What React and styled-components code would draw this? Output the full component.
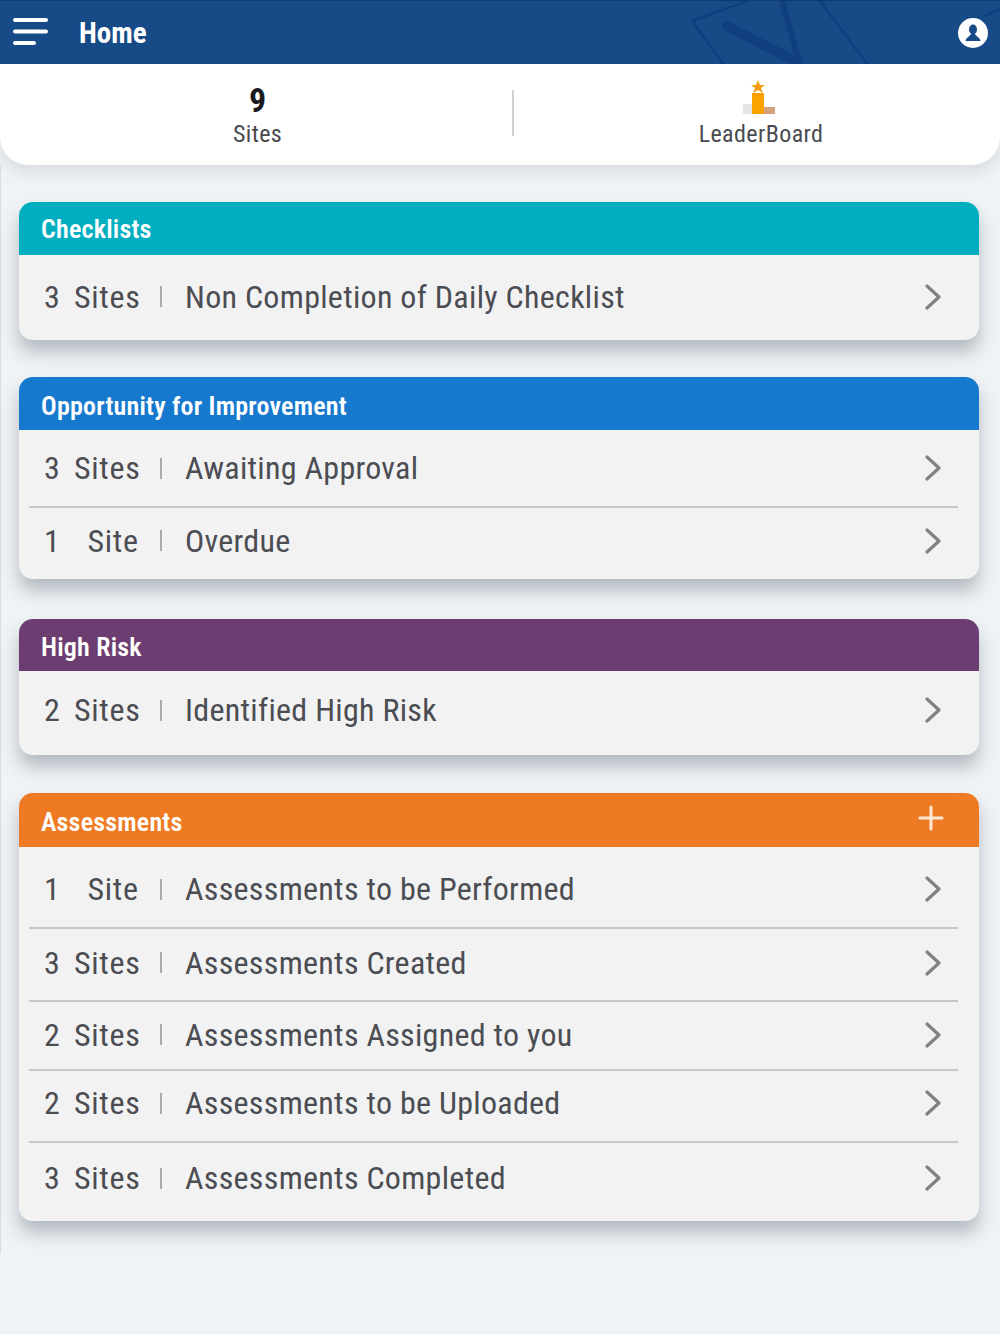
import styled, { createGlobalStyle } from "styled-components";
import { Plus } from "lucide-react";

const GlobalStyle = createGlobalStyle`
  html, body {
    margin: 0;
    padding: 0;
    background: #eff3f6;
  }
  body {
    font-family: Roboto, "Liberation Sans", sans-serif;
    font-stretch: 80%;
  }
`;

const Page = styled.div`
  width: 1000px;
  height: 1334px;
  overflow: hidden;
`;

const TopBar = styled.header`
  position: relative;
  height: 63px;
  display: flex;
  align-items: center;
  padding: 0 12px 0 13px;
  background: #174b87;
  border-top: 1px solid #0f3a70;
  color: #fff;
  overflow: hidden;
`;

const Watermark = styled.svg`
  position: absolute;
  left: 680px;
  top: 0;
`;

const MenuButton = styled.svg`
  flex: none;
  margin-top: -2px;
`;

const Title = styled.h1`
  margin: 0 0 0 30px;
  font-size: 29px;
  font-weight: 700;
`;

const Avatar = styled.svg`
  position: relative;
  margin-left: auto;
`;

const Summary = styled.section`
  display: grid;
  grid-template-columns: 512px 2px 1fr;
  align-items: center;
  height: 101px;
  background: #fff;
  border-radius: 0 0 28px 28px;
  box-shadow: 0 8px 14px rgba(90, 100, 115, 0.14);
`;

const Stat = styled.div`
  display: flex;
  flex-direction: column;
  align-items: center;
  justify-content: flex-end;
  height: 84px;
  padding-left: ${(p) => p.$shift}px;
  padding-bottom: 15px;
`;

const StatValue = styled.div`
  font-size: 34px;
  line-height: 40px;
  font-weight: 700;
  color: #1b1b1f;
  margin-bottom: -1px;
`;

const StatLabel = styled.div`
  font-size: 24px;
  line-height: 30px;
  color: #4a4b50;
  letter-spacing: 0.4px;
`;

const LeaderIcon = styled.svg`
  margin: 0 4px 3px 0;
`;

const StatDivider = styled.div`
  width: 2px;
  height: 46px;
  background: #cfd2d4;
  margin-top: -4px;
`;

const Content = styled.main`
  display: flex;
  flex-direction: column;
  box-sizing: border-box;
  height: 1089px;
  padding: 37px 21px 0 18px;
  border-left: 1px solid #d9dde1;
`;

const Card = styled.section`
  margin-bottom: ${(p) => p.$gap}px;
  background: #f2f2f3;
  border-radius: 14px;
  box-shadow: 0 12px 17px rgba(70, 80, 95, 0.34);
`;

const CardHeader = styled.div`
  display: flex;
  align-items: center;
  justify-content: space-between;
  box-sizing: border-box;
  height: ${(p) => p.$height}px;
  padding: ${(p) => p.$drop}px 29px 0 22px;
  background: ${(p) => p.$color};
  border-radius: 14px 14px 0 0;
  color: #fff;
  font-size: 26px;
  font-weight: 600;
  letter-spacing: 0.2px;
`;

const PlusIcon = styled(Plus)`
  margin-top: -8px;
  color: #fde8d6;
`;

const Row = styled.div`
  display: grid;
  grid-template-columns: 16px 80px 22px 1fr 34px;
  align-items: center;
  box-sizing: border-box;
  height: ${(p) => p.$height}px;
  margin: 0 21px 0 10px;
  padding: ${(p) => Math.max(p.$nudge, 0)}px 8px ${(p) => Math.max(-p.$nudge, 0)}px 15px;
  color: #4c4d52;
  font-size: 32px;
  border-top: ${(p) => (p.$divided ? "2px solid #c6c7c9" : "0")};
`;

const Count = styled.span`
  text-align: center;
`;

const Unit = styled.span`
  box-sizing: border-box;
  width: 66px;
  margin-left: 14px;
  padding-left: ${(p) => (p.$single ? 12 : 0)}px;
  text-align: center;
  letter-spacing: 0.7px;
`;

const Sep = styled.span`
  justify-self: end;
  width: 2px;
  height: 21px;
  background: #a9aaad;
`;

const RowText = styled.span`
  padding-left: 23px;
  letter-spacing: 0.3px;
`;

const Arrow = styled.svg`
  justify-self: center;
  fill: none;
  stroke: #808185;
  stroke-width: 3.2;
  stroke-linecap: round;
  stroke-linejoin: round;
`;

const cards = [
  {
    title: "Checklists",
    color: "#01aec0",
    head: 53,
    drop: 0,
    gap: 37,
    rows: [{ n: 3, unit: "Sites", text: "Non Completion of Daily Checklist", h: 85, nudge: -2 }],
  },
  {
    title: "Opportunity for Improvement",
    color: "#1779cd",
    head: 53,
    drop: 4,
    gap: 40,
    rows: [
      { n: 3, unit: "Sites", text: "Awaiting Approval", h: 76, nudge: 0 },
      { n: 1, unit: "Site", text: "Overdue", h: 73, nudge: -6 },
    ],
  },
  {
    title: "High Risk",
    color: "#6c3d70",
    head: 52,
    drop: 4,
    gap: 38,
    rows: [{ n: 2, unit: "Sites", text: "Identified High Risk", h: 84, nudge: -6 }],
  },
  {
    title: "Assessments",
    color: "#ee7a23",
    head: 54,
    drop: 4,
    gap: 0,
    plus: true,
    rows: [
      { n: 1, unit: "Site", text: "Assessments to be Performed", h: 80, nudge: 4 },
      { n: 3, unit: "Sites", text: "Assessments Created", h: 73, nudge: -4 },
      { n: 2, unit: "Sites", text: "Assessments Assigned to you", h: 69, nudge: -2 },
      { n: 2, unit: "Sites", text: "Assessments to be Uploaded", h: 72, nudge: -6 },
      { n: 3, unit: "Sites", text: "Assessments Completed", h: 80, nudge: -8 },
    ],
  },
];

export default function App() {
  return (
    <Page>
      <GlobalStyle />
      <TopBar>
        <Watermark width="320" height="64" viewBox="0 0 320 64" fill="none" stroke="#0f3f7e">
          <path d="M12 20 L67 0 M12 20 L44 64 M140 0 L188 64" strokeWidth="2.5" />
          <path d="M47 25 L115 60" strokeWidth="10" strokeLinecap="round" />
          <path d="M102 0 L120 64" strokeWidth="6" />
          <path d="M305 15 L325 6" strokeWidth="2.5" />
        </Watermark>
        <MenuButton width="36" height="30" viewBox="0 0 36 30">
          <rect x="0" y="1" width="35" height="4" rx="2" fill="#fff" />
          <rect x="0" y="12.500" width="35" height="4" rx="2" fill="#fff" />
          <rect x="0" y="24" width="23" height="4" rx="2" fill="#fff" />
        </MenuButton>
        <Title>Home</Title>
        <Avatar width="30" height="32" viewBox="0 0 30 32">
          <circle cx="15" cy="16" r="15" fill="#fff" />
          <ellipse cx="15" cy="12.500" rx="4" ry="5" fill="#174b87" />
          <path d="M7.500 24 C8 20.500 11.500 20 13 17 L17 17 C18.500 20 22 20.500 22.500 24 Z" fill="#174b87" />
        </Avatar>
      </TopBar>

      <Summary>
        <Stat $shift={3}>
          <StatValue>9</StatValue>
          <StatLabel>Sites</StatLabel>
        </Stat>
        <StatDivider />
        <Stat $shift={8}>
          <LeaderIcon width="34" height="36" viewBox="0 0 34 36">
            <polygon points="16,0 18,5 23,5 19,8 21,13 16,10 11,13 13,8 9,5 14,5" fill="#f59d0c" />
            <rect x="1" y="24" width="9" height="10" fill="#e6e6e6" />
            <rect x="10" y="13" width="12" height="21" fill="#fba100" />
            <rect x="22" y="27" width="11" height="7" fill="#d3a27c" />
          </LeaderIcon>
          <StatLabel>LeaderBoard</StatLabel>
        </Stat>
      </Summary>

      <Content>
        {cards.map((card) => (
          <Card key={card.title} $gap={card.gap}>
            <CardHeader $color={card.color} $height={card.head} $drop={card.drop}>
              {card.title}
              {card.plus && <PlusIcon size={38} strokeWidth={1.9} />}
            </CardHeader>
            {card.rows.map((row, i) => (
              <Row key={row.text} $height={row.h} $divided={i > 0} $nudge={row.nudge}>
                <Count>{row.n}</Count>
                <Unit $single={row.n === 1}>{row.unit}</Unit>
                <Sep />
                <RowText>{row.text}</RowText>
                <Arrow width="16" height="26" viewBox="0 0 16 26">
                  <path d="M2 2 L14 13 L2 24" />
                </Arrow>
              </Row>
            ))}
          </Card>
        ))}
      </Content>
    </Page>
  );
}
